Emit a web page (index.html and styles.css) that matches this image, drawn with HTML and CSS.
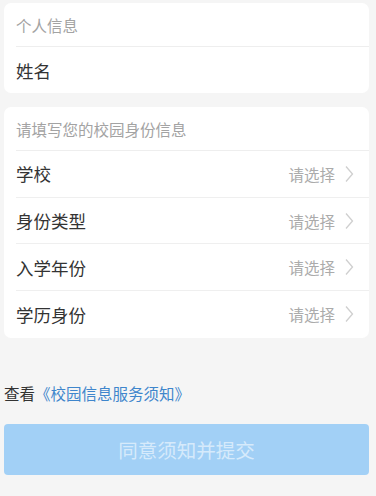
FILE: index.html
```html
<!DOCTYPE html>
<html lang="zh">
<head>
<meta charset="utf-8">
<link rel="stylesheet" href="styles.css">
</head>
<body>
<div class="page">
  <section class="card">
    <div class="card-head">个人信息</div>
    <div class="row"><span class="label">姓名</span></div>
  </section>
  <section class="card card-gap">
    <div class="card-head">请填写您的校园身份信息</div>
    <div class="row row-tall"><span class="label">学校</span><span class="pick">请选择<svg class="chev" viewBox="0 0 10 18" width="10" height="18"><path d="M2 1.5 L8.5 9 L2 16.5" fill="none" stroke="#cfcfcf" stroke-width="1.3"/></svg></span></div>
    <div class="row row-tall"><span class="label">身份类型</span><span class="pick">请选择<svg class="chev" viewBox="0 0 10 18" width="10" height="18"><path d="M2 1.5 L8.5 9 L2 16.5" fill="none" stroke="#cfcfcf" stroke-width="1.3"/></svg></span></div>
    <div class="row row-tall"><span class="label">入学年份</span><span class="pick">请选择<svg class="chev" viewBox="0 0 10 18" width="10" height="18"><path d="M2 1.5 L8.5 9 L2 16.5" fill="none" stroke="#cfcfcf" stroke-width="1.3"/></svg></span></div>
    <div class="row row-tall"><span class="label">学历身份</span><span class="pick">请选择<svg class="chev" viewBox="0 0 10 18" width="10" height="18"><path d="M2 1.5 L8.5 9 L2 16.5" fill="none" stroke="#cfcfcf" stroke-width="1.3"/></svg></span></div>
  </section>
  <p class="notice">查看<a class="link">《校园信息服务须知》</a></p>
  <button class="submit" type="button">同意须知并提交</button>
</div>
</body>
</html>
```
FILE: styles.css
```css
html, body {
  margin: 0;
  padding: 0;
  background: #f5f5f5;
}
body {
  font-family: "Noto Sans CJK SC", "Noto Sans", sans-serif;
  color: #333;
}
.page {
  padding: 3px 7px 0 4px;
}
.card {
  background: #fff;
  border-radius: 7px;
  padding-left: 12px;
}
.card-gap {
  margin-top: 14px;
}
.card-head {
  height: 44px;
  display: flex;
  align-items: center;
  font-size: 15.5px;
  color: #a3a3a3;
  border-bottom: 1px solid #eeeeee;
  box-sizing: border-box;
}
.row {
  height: 46px;
  display: flex;
  align-items: center;
  justify-content: space-between;
  border-bottom: 1px solid #efefef;
  box-sizing: border-box;
  padding-right: 15px;
}
.row-tall {
  height: 46.7px;
}
.row:last-child {
  border-bottom: none;
}
.label {
  font-size: 17.5px;
  color: #333;
}
.pick {
  display: flex;
  align-items: center;
  font-size: 15.5px;
  color: #ababab;
  gap: 9px;
}
.chev {
  display: block;
}
.notice {
  margin: 44px 0 0;
  font-size: 15.5px;
  line-height: 22px;
  color: #333;
}
.link {
  color: #3f86cc;
}
.submit {
  display: block;
  margin-top: 20px;
  width: 100%;
  height: 51px;
  border: none;
  border-radius: 4px;
  background: #a2d0f6;
  color: #d6eafb;
  font-family: "Noto Sans CJK SC", "Noto Sans", sans-serif;
  font-size: 19.5px;
  padding: 0;
}
```
